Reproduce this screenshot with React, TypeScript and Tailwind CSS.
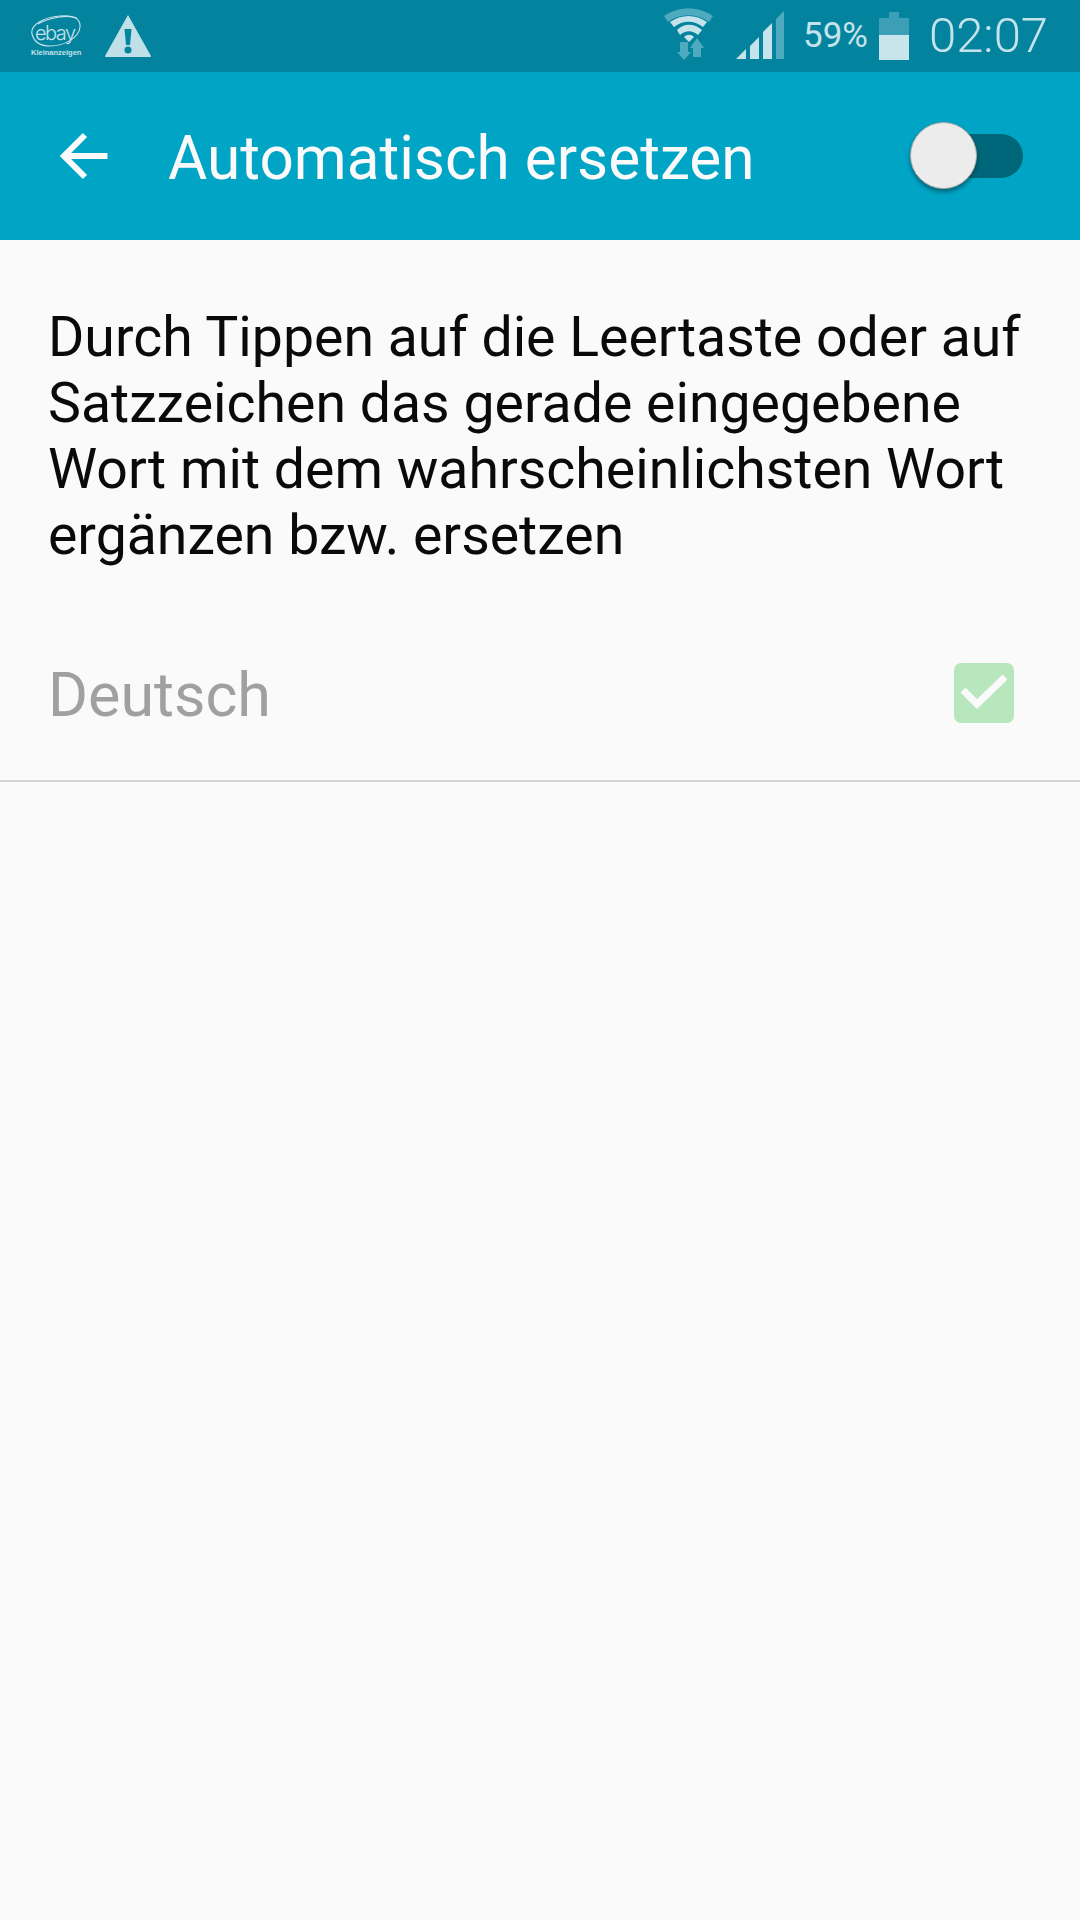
import React from "react";

const roboto = { fontFamily: "Roboto, sans-serif" };

function Ebay() {
  return (
    <div className="relative w-[52px] h-[44px] shrink-0">
      <svg width="52" height="34" viewBox="0 0 52 34" className="absolute left-0 top-0" fill="none" stroke="#c4e3ea" strokeWidth="1.1">
        <path d="M2 20C0 11 14 3 30 2C42 1 51 4 50 13C49 24 34 32 20 32C10 32 4 28 2 20Z" />
        <path d="M8 10C18 4 38 0 47 4" />
      </svg>
      <span className="absolute left-[5px] top-[7px] text-[20px] leading-[24px] tracking-[-1.5px] text-[#c4e3ea] font-light" style={{ fontFamily: "Inter, sans-serif" }}>ebay</span>
      <span className="absolute left-[1px] top-[34px] whitespace-nowrap text-[7.500px] leading-[10px] font-bold text-[#c4e3ea]" style={{ fontFamily: "'Liberation Sans', sans-serif" }}>Kleinanzeigen</span>
    </div>
  );
}

function Warning() {
  return (
    <svg width="48" height="44" viewBox="0 0 48 44" className="shrink-0">
      <path d="M24 1L47 42Q47.500 43 46 43H2Q.5 43 1 42Z" fill="#bfe0e6" />
      <path d="M20.500 15H27.500L26 31H22Z" fill="#04839f" />
      <circle cx="24" cy="36" r="3.500" fill="#04839f" />
    </svg>
  );
}

function Wifi() {
  return (
    <svg width="50" height="52" viewBox="0 0 50 52" className="shrink-0">
      <path d="M0 8C14 -2 35 -2 49 8L45 14C33 5 16 5 4 14Z" fill="#4eabbf" />
      <path d="M6 14C17 6 32 6 43 14L39 19C30 12 19 12 10 19Z" fill="#c4e3ea" />
      <path d="M13 22C20 15 30 15 38 22L34 27C28 22 22 22 16 27Z" fill="#c4e3ea" />
      <path d="M20 29C23 26 27 26 30 29L25 34Z" fill="#c4e3ea" />
      <path d="M16 34H24V44H27L20 52L13 44H16Z" fill="#4eabbf" />
      <path d="M33 30L40 40H37V49H29V40H26Z" fill="#4eabbf" />
    </svg>
  );
}

function Signal() {
  return (
    <svg width="48" height="48" viewBox="0 0 48 48" className="shrink-0">
      <path d="M0 48L10 38V48Z" fill="#c4e3ea" />
      <path d="M14 35L23 26V48H14Z" fill="#c4e3ea" />
      <path d="M27 21L36 12V48H27Z" fill="#c4e3ea" />
      <path d="M40 8L48 0V48H40Z" fill="#4eabbf" />
    </svg>
  );
}

function Battery() {
  return (
    <div className="flex flex-col items-center w-[30px] h-[48px] shrink-0">
      <div className="w-[10px] h-[6px] bg-[#3d9fb6]" />
      <div className="w-[30px] h-[17px] bg-[#3d9fb6]" />
      <div className="w-[30px] h-[25px] bg-[#c9e5eb]" />
    </div>
  );
}

export default function App() {
  return (
    <div className="w-[1080px] h-[1920px] flex flex-col bg-[#fafafa]" style={roboto}>
      <div className="h-[72px] bg-[#04839f] flex items-center pl-[30px] pr-[32px]">
        <Ebay />
        <div className="ml-[22px]"><Warning /></div>
        <div className="ml-auto -mt-[4px]"><Wifi /></div>
        <div className="ml-[22px] -mt-[2px]"><Signal /></div>
        <span className="ml-[19px] text-[35px] leading-[40px] text-[#c4e3ea]">59%</span>
        <div className="ml-[11px]"><Battery /></div>
        <span className="ml-[20px] text-[49px] leading-[56px] font-light text-[#c4e3ea]">02:07</span>
      </div>
      <div className="h-[168px] bg-[#00a5c6] flex items-center pl-[60px] pr-[57px]">
        <svg width="50" height="48" viewBox="0 0 50 48" className="shrink-0" fill="none" stroke="#fafafa" strokeWidth="6">
          <path d="M47.500 24H5M25 3L4 24L25 45" />
        </svg>
        <span className="ml-[58px] mt-[6px] text-[60.300px] leading-[72px] text-[#fafafa]">Automatisch ersetzen</span>
        <div className="ml-auto -mt-[2px] relative w-[113px] h-[67px]">
          <div className="absolute right-0 top-[12px] w-[90px] h-[44px] rounded-full bg-[#006679]" />
          <div className="absolute left-0 top-0 w-[67px] h-[67px] rounded-full bg-[#ececec] border border-[#a9a9a9] shadow-[0_3px_4px_rgba(0,50,60,0.55)]" />
        </div>
      </div>
      <div className="pl-[48px] pr-[40px] pt-[65px] text-[55.400px] leading-[66px] text-[#0a0a0a]">
        Durch Tippen auf die Leertaste oder auf Satzzeichen das gerade eingegebene Wort mit dem wahrscheinlichsten Wort ergänzen bzw. ersetzen
      </div>
      <div className="mt-[36px] h-[175px] pl-[48px] pr-[66px] flex items-center justify-between border-b-2 border-[#d4d4d4] box-content">
        <span className="mt-[4px] text-[61px] leading-[72px] text-[#a0a0a0]">Deutsch</span>
        <div className="w-[60px] h-[60px] rounded-[7px] bg-[#b8e6bd] flex items-center justify-center">
          <svg width="46" height="36" viewBox="0 0 46 36" fill="none" stroke="#fafafa" strokeWidth="7"><path d="M2 15L16 29L44 2" /></svg>
        </div>
      </div>
    </div>
  );
}
